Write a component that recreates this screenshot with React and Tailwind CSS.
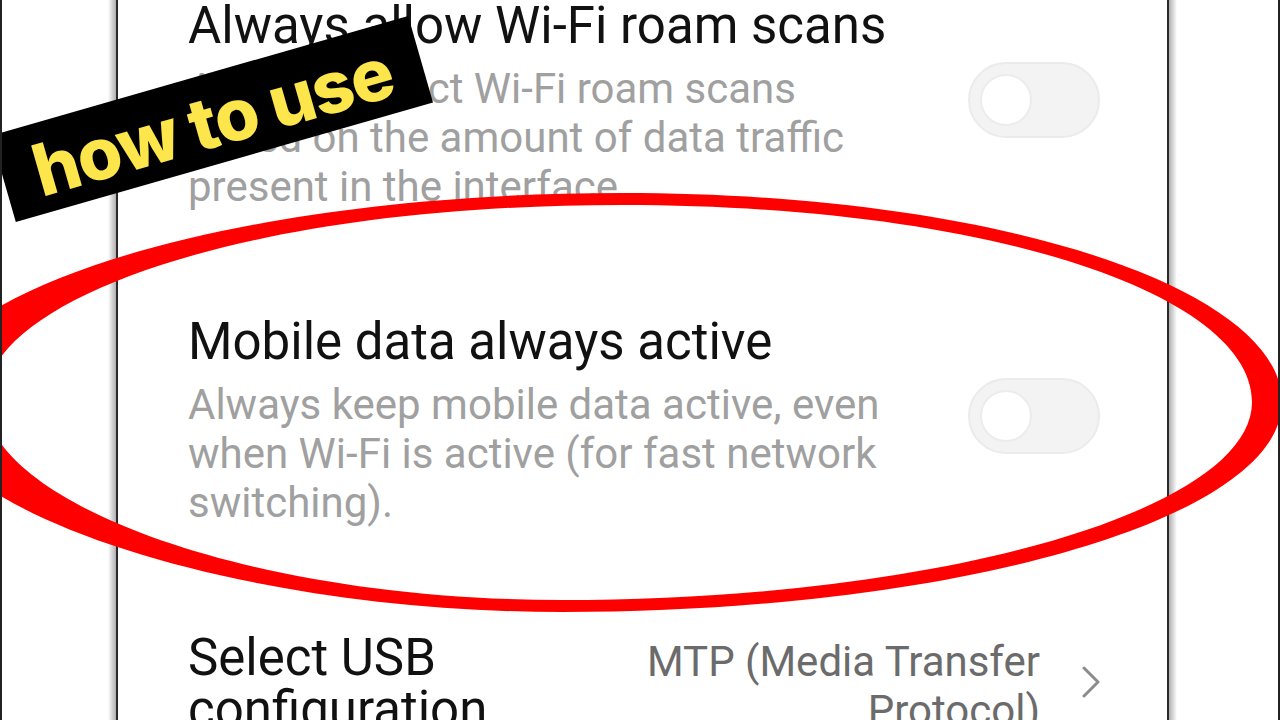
const Toggle = () => (
  <div className="mt-[62px] w-[132px] h-[76px] shrink-0 rounded-full bg-[#f3f3f3] border-2 border-[#ebebeb] flex items-center pl-[10px]">
    <div className="w-[52px] h-[52px] rounded-full bg-white border-2 border-[#ececec]" />
  </div>
);

const Title = ({ children }) => (
  <div className="text-[51px] leading-[52px] text-[#111] whitespace-nowrap">{children}</div>
);

const Desc = ({ children }) => (
  <div className="mt-[12px] text-[42px] leading-[49px] text-[#a0a0a0] whitespace-nowrap">{children}</div>
);

// hand drawn red marker ring
const Ring = () => (
  <svg className="absolute inset-0 pointer-events-none" width="1280" height="720" viewBox="0 0 1280 720">
    <path
      fill="#ff0000"
      fillRule="evenodd"
      d="M620,193 C1000,193 1280,290 1280,402 C1280,520 950,612 560,612 C230,612 -80,510 -80,400 C-80,290 230,193 620,193 Z M620,205 C990,205 1250,295 1250,402 C1250,510 940,600 560,600 C240,600 -17,500 -17,400 C-17,300 240,205 620,205 Z"
    />
  </svg>
);

export default function App() {
  return (
    <div className="relative w-[1280px] h-[720px] overflow-hidden bg-white flex border-l-2 border-r-2 border-[#222] font-[Roboto,sans-serif]">
      <div className="w-[106px] shrink-0" />
      <div className="w-[8px] shrink-0 bg-gradient-to-r from-white to-[#b0b0b0]" />
      <div className="w-[2px] shrink-0 bg-[#2a2a2a]" />

      <div className="w-[1049px] shrink-0 pl-[70px] pr-[67px]">
        <div className="flex justify-between">
          <div>
            <Title>Always allow Wi-Fi roam scans</Title>
            <Desc>
              Always restrict Wi-Fi roam scans
              <br />
              based on the amount of data traffic
              <br />
              present in the interface
            </Desc>
          </div>
          <Toggle />
        </div>

        <div className="mt-[105px] flex justify-between">
          <div>
            <Title>Mobile data always active</Title>
            <Desc>
              Always keep mobile data active, even
              <br />
              when Wi-Fi is active (for fast network
              <br />
              switching).
            </Desc>
          </div>
          <Toggle />
        </div>

        <div className="mt-[105px] flex justify-between">
          <Title>
            Select USB
            <br />
            configuration
          </Title>
          <div className="flex items-start gap-[42px]">
            <div className="mt-[5px] text-[42px] leading-[49px] text-[#6b6b6b] text-right whitespace-nowrap">
              MTP (Media Transfer
              <br />
              Protocol)
            </div>
            <svg className="mt-[34px]" width="18" height="32" viewBox="0 0 18 32" fill="none">
              <path d="M2 2 L16 16 L2 30" stroke="#8c8c8c" strokeWidth="3" strokeLinecap="round" strokeLinejoin="round" />
            </svg>
          </div>
        </div>
      </div>

      <div className="w-[2px] shrink-0 bg-[#2a2a2a]" />
      <div className="w-[8px] shrink-0 bg-gradient-to-r from-[#b0b0b0] to-white" />
      <div className="flex-1" />

      <Ring />

      <div className="absolute left-[-7px] top-[74px] w-[434px] h-[90px] bg-black rotate-[-16deg] flex items-center justify-center pt-[4px]">
        <span className="font-[Inter,sans-serif] font-extrabold text-[72px] leading-none text-[#fde64b] tracking-[-0.02em] whitespace-nowrap">
          how to use
        </span>
      </div>
    </div>
  );
}
